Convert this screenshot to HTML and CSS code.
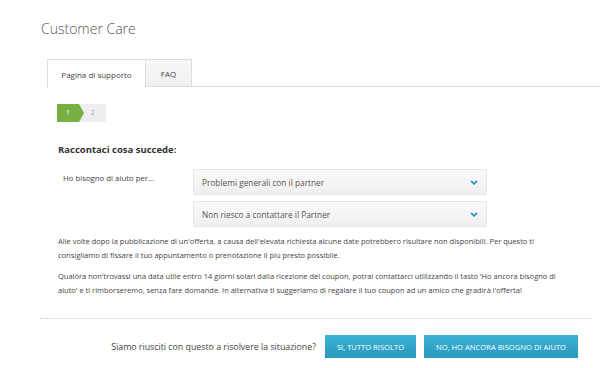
FILE: index.html
```html
<!DOCTYPE html>
<html lang="it">
<head>
    <meta charset="UTF-8">
    <meta name="viewport" content="width=device-width, initial-scale=1.0">
    <title>Customer Care</title>
    <link rel="stylesheet" href="styles.css">
</head>
<body>
    <h1 class="page-title">Customer Care</h1>

    <div class="tabs">
        <div class="tab active">Pagina di supporto</div>
        <div class="tab">FAQ</div>
    </div>

    <div class="content">
        <div class="steps">
            <div class="step done">1</div>
            <div class="step">2</div>
        </div>

        <h2 class="section-title">Raccontaci cosa succede:</h2>

        <div class="form-row">
            <div class="form-label">Ho bisogno di aiuto per...</div>
            <div class="form-fields">
                <div class="select">
                    <span>Problemi generali con il partner</span>
                    <svg class="chevron" width="8" height="5" viewBox="0 0 8 5"><path d="M1 1 L4 3.8 L7 1" fill="none" stroke="#2b9ac3" stroke-width="1.8"/></svg>
                </div>
                <div class="select">
                    <span>Non riesco a contattare il Partner</span>
                    <svg class="chevron" width="8" height="5" viewBox="0 0 8 5"><path d="M1 1 L4 3.8 L7 1" fill="none" stroke="#2b9ac3" stroke-width="1.8"/></svg>
                </div>
            </div>
        </div>

        <p class="info">Alle volte dopo la pubblicazione di un'offerta, a causa dell'elevata richiesta alcune date potrebbero risultare non disponibili. Per questo ti consigliamo di fissare il tuo appuntamento o prenotazione il più presto possibile.</p>
        <p class="info">Qualora non'trovassi una data utile entro 14 giorni solari dalla ricezione del coupon, potrai contattarci utilizzando il tasto 'Ho ancora bisogno di aiuto' e ti rimborseremo, senza fare domande. In alternativa ti suggeriamo di regalare il tuo coupon ad un amico che gradirà l'offerta!</p>
    </div>

    <div class="footer">
        <span class="question">Siamo riusciti con questo a risolvere la situazione?</span>
        <button class="btn">SI, TUTTO RISOLTO</button>
        <button class="btn">NO, HO ANCORA BISOGNO DI AIUTO</button>
    </div>
</body>
</html>
```

FILE: styles.css
```css
body {
    margin: 0;
    font-family: 'Open Sans', sans-serif;
    color: #444;
    background-color: #fff;
}
.page-title {
    margin: 0;
    padding: 17px 0 0 41px;
    font-size: 14px;
    font-weight: 300;
    color: #555;
    line-height: 24px;
}
.tabs {
    display: flex;
    margin: 18px 0 0 47px;
    border-bottom: 1px solid #dedede;
    height: 27px;
}
.tab {
    font-size: 8px;
    color: #444;
    border: 1px solid #dedede;
    border-bottom: none;
    display: flex;
    align-items: center;
    justify-content: center;
    background: linear-gradient(#f8f8f8, #efefef);
}
.tab:first-child {
    width: 97px;
}
.tab:last-child {
    width: 45px;
    border-left: none;
}
.tab.active {
    background: #fff;
    height: 28px;
}
.content {
    padding: 17px 0 0 57px;
}
.steps {
    display: flex;
    height: 18px;
}
.step {
    font-size: 7px;
    line-height: 18px;
    color: #aaa;
    background-color: #eee;
    width: 27px;
    text-align: center;
}
.step.done {
    position: relative;
    width: 22px;
    background-color: #78b043;
    color: #fff;
    z-index: 1;
}
.step.done::after {
    content: '';
    position: absolute;
    right: -5px;
    top: 0;
    border-left: 5px solid #78b043;
    border-top: 9px solid transparent;
    border-bottom: 9px solid transparent;
}
.section-title {
    margin: 20px 0 0 1px;
    font-size: 9.5px;
    font-weight: 700;
    color: #333;
    line-height: 16px;
}
.form-row {
    display: flex;
    margin-top: 11px;
}
.form-label {
    width: 130px;
    padding: 2px 0 0 6px;
    font-size: 7.8px;
    line-height: 14px;
    color: #444;
}
.form-fields {
    display: flex;
    flex-direction: column;
    gap: 6px;
}
.select {
    width: 276px;
    height: 24px;
    padding: 0 8px;
    border: 1px solid #e6e6e6;
    background: linear-gradient(#fafafa, #efefef);
    display: flex;
    align-items: center;
    justify-content: space-between;
    font-size: 8.3px;
    color: #555;
}
.chevron {
    margin-right: 0;
}
.info {
    margin: 7px 0 0 1px;
    width: 500px;
    font-size: 7.5px;
    line-height: 14px;
    color: #444;
}
.info + .info {
    margin-top: 7px;
}
.footer {
    margin: 21px 8px 0 40px;
    padding: 16px 14px 0 0;
    border-top: 1px dotted #c8c8c8;
    display: flex;
    justify-content: flex-end;
    align-items: center;
    gap: 8px;
}
.question {
    font-size: 8.8px;
    color: #444;
    margin-right: 1px;
}
.btn {
    height: 23px;
    padding: 0 10px;
    border: none;
    background: linear-gradient(#3db2d3, #2898bf);
    color: #fff;
    font-family: 'Open Sans', sans-serif;
    font-size: 7.6px;
    cursor: pointer;
}
.btn:first-of-type {
    width: 91px;
}
.btn:last-of-type {
    width: 154px;
}
```
